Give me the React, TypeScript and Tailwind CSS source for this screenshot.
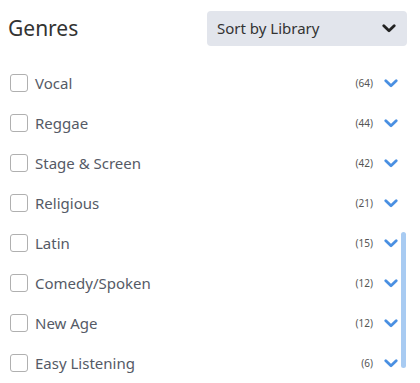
import React from "react";

const genres: [string, number][] = [
  ["Vocal", 64],
  ["Reggae", 44],
  ["Stage & Screen", 42],
  ["Religious", 21],
  ["Latin", 15],
  ["Comedy/Spoken", 12],
  ["New Age", 12],
  ["Easy Listening", 6],
];

function Chevron({ className }: { className: string }) {
  return (
    <svg viewBox="0 0 14 9" width="14" height="9" className={className}>
      <path d="M1.8 1.8 L7 6.8 L12.2 1.8" fill="none" stroke="currentColor" strokeWidth="2.8" strokeLinecap="round" strokeLinejoin="round" />
    </svg>
  );
}

export default function App() {
  return (
    <div className="w-[420px] h-[383px] bg-white overflow-hidden relative" style={{ fontFamily: '"Noto Sans", "Open Sans", sans-serif' }}>
      <div className="flex items-center justify-between pl-[8px] pr-[13px] pt-[11px] h-[46px]">
        <div className="text-[21px] text-[#333333] leading-none">Genres</div>
        <div className="w-[200px] h-[35px] rounded-[4px] bg-[#e2e5ec] flex items-center justify-between pl-[10px] pr-[11px]">
          <span className="text-[15px] text-[#333333]">Sort by Library</span>
          <Chevron className="text-[#222222]" />
        </div>
      </div>
      <div className="pt-[17px]">
        {genres.map(([name, count]) => (
          <div key={name} className="h-[40px] flex items-center pl-[10px] pr-[22px]">
            <div className="w-[18px] h-[18px] border border-[#b0b0b0] rounded-[3px] bg-white" />
            <span className="ml-[7px] text-[15px] text-[#555a66] flex-1">{name}</span>
            <span className="text-[10px] text-[#555555] mr-[11px]">({count})</span>
            <Chevron className="text-[#4a90e2]" />
          </div>
        ))}
      </div>
      <div className="absolute left-[401px] top-[232px] w-[5px] h-[136px] rounded-full bg-[#a8cbf2]" />
    </div>
  );
}
